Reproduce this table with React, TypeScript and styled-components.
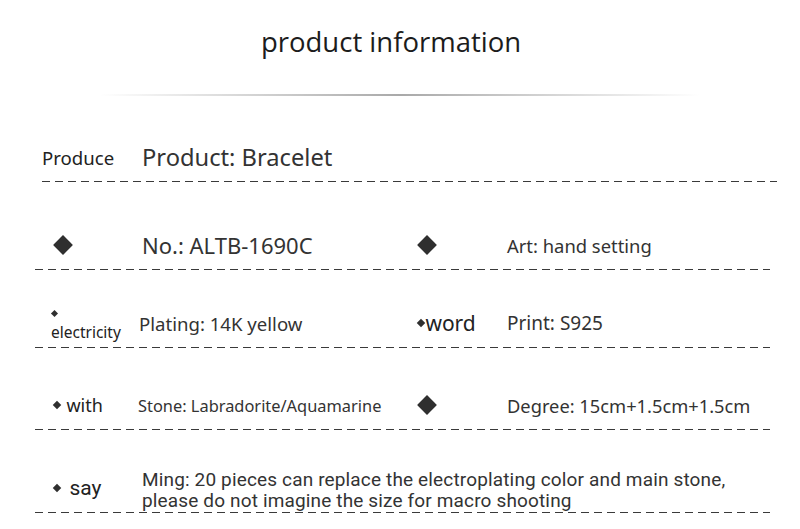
import React from 'react';
import styled, { createGlobalStyle } from 'styled-components';

const GlobalStyle = createGlobalStyle`
  html, body {
    margin: 0;
    padding: 0;
    background: #ffffff;
  }
  body {
    font-family: "Noto Sans", "Open Sans", Arial, sans-serif;
    color: #333;
  }
`;

const Page = styled.div`
  width: 800px;
  height: 529px;
  overflow: hidden;
  background: #fff;
`;

const Header = styled.header`
  height: 96px;
  display: flex;
  flex-direction: column;
  align-items: center;
`;

const Title = styled.h1`
  margin: 24px 18px 0 0;
  font: 400 27.5px "Open Sans", Arial, sans-serif;
  line-height: 36px;
  color: #1c1c1c;
`;

const Rule = styled.div`
  margin-top: 34px;
  width: 600px;
  height: 2px;
  background: linear-gradient(to right, rgba(170, 170, 170, 0), #a9a9a9 50%, rgba(170, 170, 170, 0));
`;

const Row = styled.section<{ $height: number; $inset?: number }>`
  height: ${(p) => p.$height}px;
  display: flex;
  flex-direction: column;
  justify-content: flex-end;
  padding: 0 ${(p) => 30 - (p.$inset ?? 0)}px 0 ${(p) => 35 + (p.$inset ?? 0)}px;
`;

const Cells = styled.div`
  height: 48px;
  display: grid;
  grid-template-columns: 107px 275px 90px 1fr;
  align-items: center;
`;

const Dashes = styled.div`
  height: 1px;
  background: repeating-linear-gradient(to right, #3a3a3a 0 8px, transparent 8px 13px);
`;

const Label = styled.div<{ $indent?: number; $size?: number; $gap?: number }>`
  display: flex;
  align-items: center;
  gap: ${(p) => p.$gap ?? 5}px;
  padding-left: ${(p) => p.$indent ?? 18}px;
  font-size: ${(p) => p.$size ?? 17}px;
  color: #222;
  white-space: nowrap;
`;

const StackLabel = styled.div`
  display: flex;
  flex-direction: column;
  align-items: flex-start;
  gap: 5px;
  padding: 8px 0 0 16px;
  font-size: 15.5px;
  color: #222;
`;

const Diamond = styled.span<{ $size: number }>`
  display: inline-block;
  width: ${(p) => p.$size}px;
  height: ${(p) => p.$size}px;
  margin: 0 ${(p) => p.$size * 0.2}px;
  background: #2f2f2f;
  transform: rotate(45deg);
  flex: none;
`;

const Value = styled.div<{ $size: number; $offset?: number }>`
  font-size: ${(p) => p.$size}px;
  margin-left: ${(p) => p.$offset ?? 0}px;
  color: #333;
  white-space: nowrap;
`;

const Narrow = styled.span`
  font-family: Roboto, Arial, sans-serif;
`;

const Note = styled.div`
  grid-column: 2 / 5;
  font: 400 19px Roboto, Arial, sans-serif;
  letter-spacing: 0.15px;
  line-height: 21px;
  color: #333;
  margin-top: 4px;
`;

export default function App() {
  return (
    <Page>
      <GlobalStyle />
      <Header>
        <Title>product information</Title>
        <Rule />
      </Header>

      <Row $height={86} $inset={7}>
        <Cells>
          <Label $indent={0} $size={18.6}>Produce</Label>
          <Value $size={23.7} $offset={-7}>Product: Bracelet</Value>
        </Cells>
        <Dashes />
      </Row>

      <Row $height={88}>
        <Cells>
          <Label>
            <Diamond $size={14} />
          </Label>
          <Value $size={22}>No.: ALTB-1690C</Value>
          <Label $indent={0}>
            <Diamond $size={14} />
          </Label>
          <Value $size={18.4}>Art: hand setting</Value>
        </Cells>
        <Dashes />
      </Row>

      <Row $height={78}>
        <Cells>
          <StackLabel>
            <Diamond $size={5} />
            electricity
          </StackLabel>
          <Value $size={18.6} $offset={-3}>Plating: 14K yellow</Value>
          <Label $indent={0} $size={21} $gap={0}>
            <Diamond $size={6} />
            word
          </Label>
          <Value $size={19}>Print: S925</Value>
        </Cells>
        <Dashes />
      </Row>

      <Row $height={82}>
        <Cells>
          <Label $size={18}>
            <Diamond $size={6} />
            with
          </Label>
          <Value $size={16.4} $offset={-4}>Stone: Labradorite/Aquamarine</Value>
          <Label $indent={0}>
            <Diamond $size={14} />
          </Label>
          <Value $size={18.3}>Degree: 15cm+1.5cm+1.5cm</Value>
        </Cells>
        <Dashes />
      </Row>

      <Row $height={83}>
        <Cells>
          <Label $size={21} $gap={8}>
            <Diamond $size={6} />
            <Narrow>say</Narrow>
          </Label>
          <Note>
            Ming: 20 pieces can replace the electroplating color and main stone,
            <br />
            please do not imagine the size for macro shooting
          </Note>
        </Cells>
        <Dashes />
      </Row>
    </Page>
  );
}
